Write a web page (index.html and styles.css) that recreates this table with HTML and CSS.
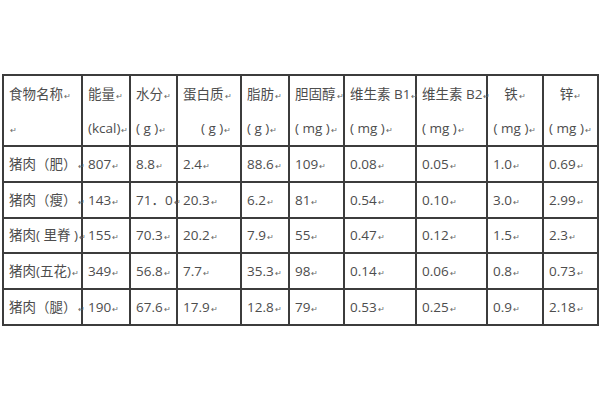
FILE: index.html
```html
<!DOCTYPE html>
<html lang="zh">
<head>
<meta charset="utf-8">
<link rel="stylesheet" href="styles.css">
</head>
<body>
<div class="page">
<table class="nutri">
<colgroup>
<col class="c1"><col class="c2"><col class="c3"><col class="c4"><col class="c5"><col class="c6"><col class="c7"><col class="c8"><col class="c9"><col class="c10"><col class="c11">
</colgroup>
<thead>
<tr>
<th>食物名称<span class="rm">↵</span><br><span class="rm">↵</span></th>
<th>能量<span class="rm">↵</span><br>(kcal)<span class="rm">↵</span></th>
<th>水分<span class="rm">↵</span><br>(&nbsp;g&nbsp;)<span class="rm">↵</span></th>
<th>蛋白质<span class="rm">↵</span><br><span class="ind">(&nbsp;g&nbsp;)<span class="rm">↵</span></span></th>
<th>脂肪<span class="rm">↵</span><br>(&nbsp;g&nbsp;)<span class="rm">↵</span></th>
<th>胆固醇<span class="rm">↵</span><br>(&nbsp;mg&nbsp;)<span class="rm">↵</span></th>
<th>维生素 B1<span class="rm">↵</span><br>(&nbsp;mg&nbsp;)<span class="rm">↵</span></th>
<th>维生素 B2<span class="rm">↵</span><br>(&nbsp;mg&nbsp;)<span class="rm">↵</span></th>
<th class="ctr">铁<span class="rm">↵</span><br>(&nbsp;mg&nbsp;)<span class="rm">↵</span></th>
<th class="ctr">锌<span class="rm">↵</span><br>(&nbsp;mg&nbsp;)<span class="rm">↵</span></th>
<th class="eol"><span class="mk"></span><br><span class="mk"></span></th>
</tr>
</thead>
<tbody>
<tr><td>猪肉（肥）<span class="rm">↵</span></td><td>807<span class="rm">↵</span></td><td>8.8<span class="rm">↵</span></td><td>2.4<span class="rm">↵</span></td><td>88.6<span class="rm">↵</span></td><td>109<span class="rm">↵</span></td><td>0.08<span class="rm">↵</span></td><td>0.05<span class="rm">↵</span></td><td>1.0<span class="rm">↵</span></td><td>0.69<span class="rm">↵</span></td><td class="eol"><span class="mk"></span></td></tr>
<tr><td>猪肉（瘦）<span class="rm">↵</span></td><td>143<span class="rm">↵</span></td><td>71．0<span class="rm">↵</span></td><td>20.3<span class="rm">↵</span></td><td>6.2<span class="rm">↵</span></td><td>81<span class="rm">↵</span></td><td>0.54<span class="rm">↵</span></td><td>0.10<span class="rm">↵</span></td><td>3.0<span class="rm">↵</span></td><td>2.99<span class="rm">↵</span></td><td class="eol"><span class="mk"></span></td></tr>
<tr><td>猪肉( 里脊 )<span class="rm">↵</span></td><td>155<span class="rm">↵</span></td><td>70.3<span class="rm">↵</span></td><td>20.2<span class="rm">↵</span></td><td>7.9<span class="rm">↵</span></td><td>55<span class="rm">↵</span></td><td>0.47<span class="rm">↵</span></td><td>0.12<span class="rm">↵</span></td><td>1.5<span class="rm">↵</span></td><td>2.3<span class="rm">↵</span></td><td class="eol"><span class="mk"></span></td></tr>
<tr><td>猪肉(五花)<span class="rm">↵</span></td><td>349<span class="rm">↵</span></td><td>56.8<span class="rm">↵</span></td><td>7.7<span class="rm">↵</span></td><td>35.3<span class="rm">↵</span></td><td>98<span class="rm">↵</span></td><td>0.14<span class="rm">↵</span></td><td>0.06<span class="rm">↵</span></td><td>0.8<span class="rm">↵</span></td><td>0.73<span class="rm">↵</span></td><td class="eol"><span class="mk"></span></td></tr>
<tr><td>猪肉（腿）<span class="rm">↵</span></td><td>190<span class="rm">↵</span></td><td>67.6<span class="rm">↵</span></td><td>17.9<span class="rm">↵</span></td><td>12.8<span class="rm">↵</span></td><td>79<span class="rm">↵</span></td><td>0.53<span class="rm">↵</span></td><td>0.25<span class="rm">↵</span></td><td>0.9<span class="rm">↵</span></td><td>2.18<span class="rm">↵</span></td><td class="eol"><span class="mk"></span></td></tr>
</tbody>
</table>
</div>
</body>
</html>
```
FILE: styles.css
```css
html, body {
  margin: 0;
  padding: 0;
  background: #ffffff;
}
.page {
  width: 600px;
  height: 400px;
  padding: 74px 0 0 2px;
  box-sizing: border-box;
  overflow: hidden;
}
.nutri {
  border-collapse: collapse;
  table-layout: fixed;
  width: 598px;
  font-family: "Open Sans", "Noto Sans CJK SC", sans-serif;
  font-size: 13.5px;
  color: #4d4d4d;
}
.c1 { width: 79px; }
.c2 { width: 48px; }
.c3 { width: 47px; }
.c4 { width: 64px; }
.c5 { width: 48px; }
.c6 { width: 55px; }
.c7 { width: 72px; }
.c8 { width: 71px; }
.c9 { width: 56px; }
.c10 { width: 55px; }
.c11 { width: 3px; }
.nutri th, .nutri td {
  border: 2px solid #3c3c3c;
  padding: 0 0 0 5px;
  text-align: left;
  font-weight: normal;
  white-space: nowrap;
  overflow: visible;
}
.nutri th {
  line-height: 34px;
  vertical-align: top;
  padding-top: 1px;
}
.nutri td {
  height: 33.8px;
  vertical-align: middle;
  line-height: 20px;
}
.nutri th.ctr {
  text-align: center;
  padding-left: 0;
}
.nutri .eol {
  border-top: none;
  border-bottom: none;
  border-right: none;
  padding: 0 0 0 1px;
}
.nutri th.eol {
  padding-top: 1px;
}
.mk {
  display: inline-block;
  width: 2px;
  height: 1px;
  background: #9a9a9a;
  vertical-align: middle;
}
.ind {
  margin-left: 18px;
}
.rm {
  font-size: 8px;
  line-height: 1;
  color: #666;
  margin-left: 1px;
}
```
